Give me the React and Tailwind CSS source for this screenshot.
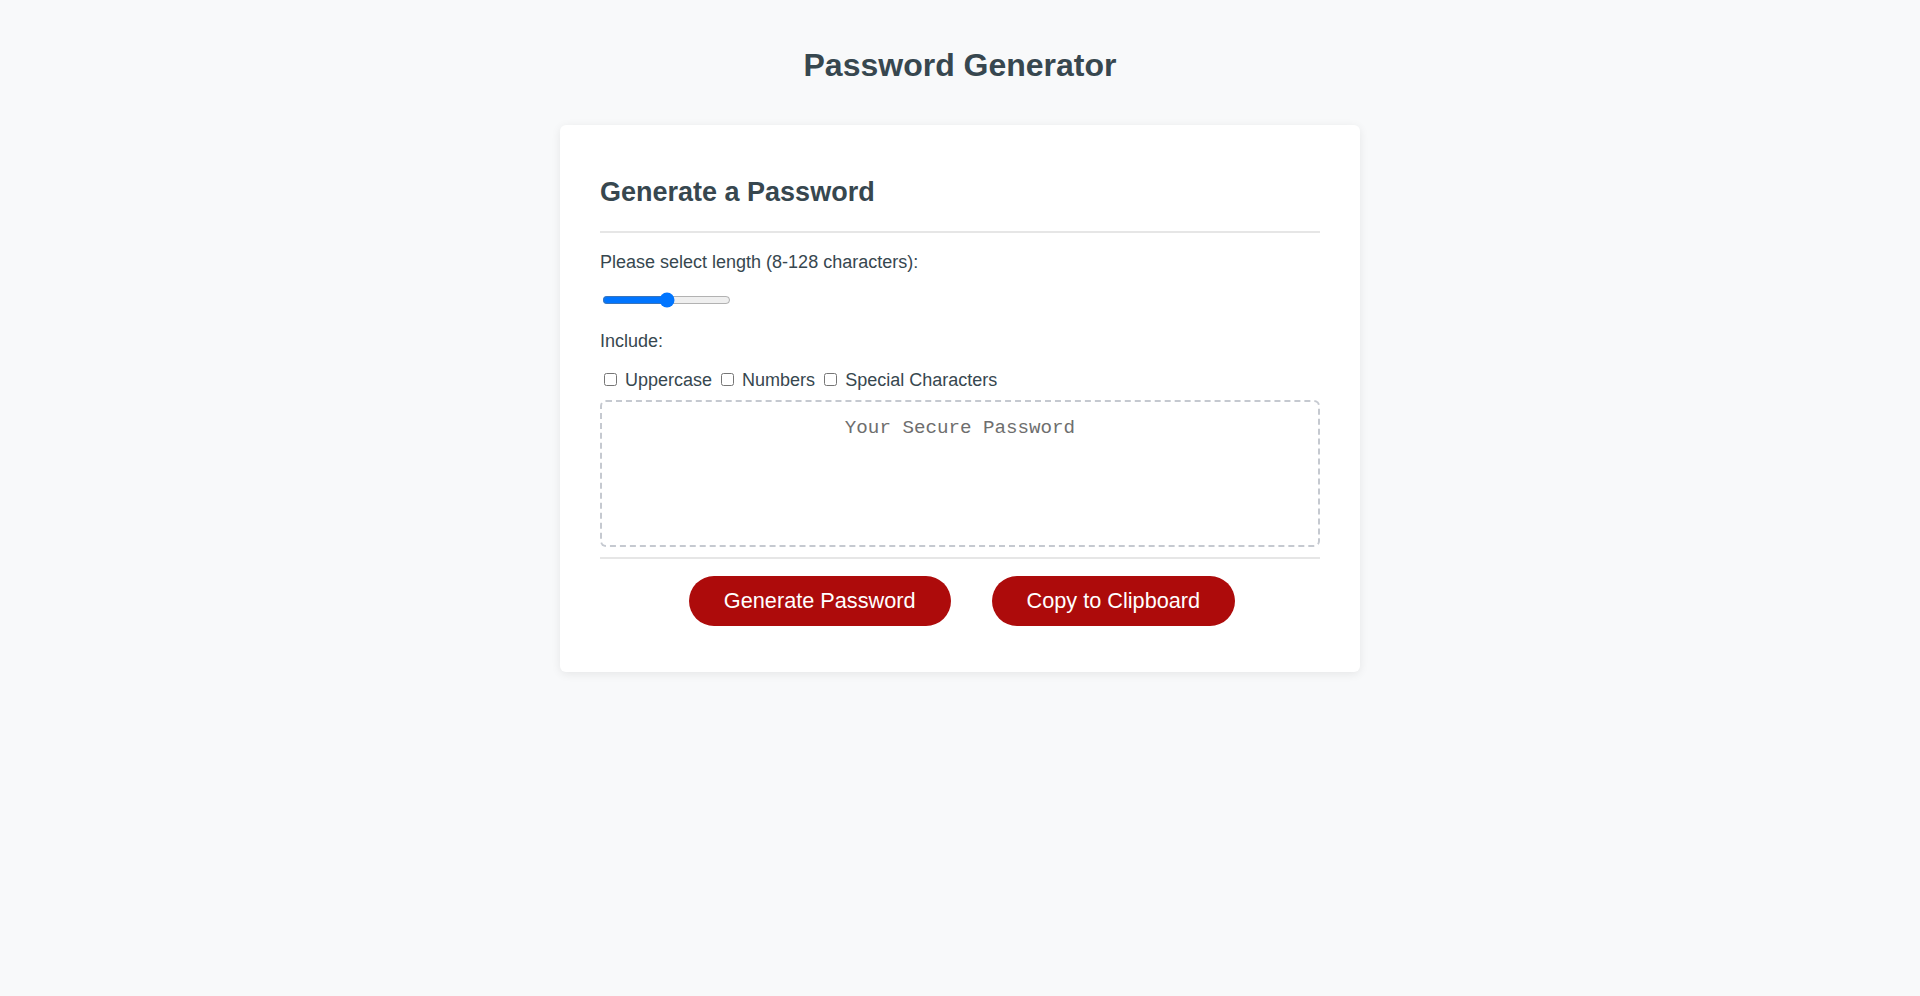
import React from "react";

export default function App() {
  return (
    <div className="min-h-screen bg-[#f8f9fa] pt-[47px] text-[#37474f]" style={{ fontFamily: '"Liberation Sans", Arial, sans-serif' }}>
      <h1 className="text-center text-[32px] font-bold leading-[37px]">Password Generator</h1>
      <div className="mx-auto mt-[41px] w-[800px] rounded-[6px] bg-white px-10 pt-[52px] pb-[46px] shadow-[0_2px_10px_rgba(0,0,0,0.08)]">
        <h2 className="text-[27px] font-bold leading-[31px]">Generate a Password</h2>
        <div className="mt-[23px] h-[2px] bg-[#e6e6e6]" />
        <p className="mt-[19px] text-[18px] leading-[21px]">Please select length (8-128 characters):</p>
        <input
          type="range"
          min={8}
          max={128}
          defaultValue={68}
          className="ml-[2px] mt-[19px] block h-4 w-[129px] accent-[#0075ff]"
        />
        <p className="mt-[23px] text-[18px] leading-[21px]">Include:</p>
        <div className="mt-[18px] text-[18px] leading-[21px]">
          <input type="checkbox" className="mb-[3px] ml-[4px] mr-[3px] mt-[3px]" />
          {" "}Uppercase{" "}
          <input type="checkbox" className="mb-[3px] ml-[4px] mr-[3px] mt-[3px]" />
          {" "}Numbers{" "}
          <input type="checkbox" className="mb-[3px] ml-[4px] mr-[3px] mt-[3px]" />
          {" "}Special Characters
        </div>
        <div
          className="mt-[9px] h-[147px] rounded-[6px] border-2 border-dashed border-[#c5c9d0] px-[15px] pt-[12px] text-center text-[19.2px] text-[#6e6e6e]"
          style={{ fontFamily: '"Liberation Mono", "Courier New", monospace' }}
        >
          Your Secure Password
        </div>
        <div className="mt-[10px] h-[2px] bg-[#e6e6e6]" />
        <div className="mt-[17px] flex justify-center gap-[41px] pl-[4px]">
          <button className="h-[50px] rounded-full bg-[#ad0b0b] px-[35px] text-[21.7px] text-white">Generate Password</button>
          <button className="h-[50px] rounded-full bg-[#ad0b0b] px-[35px] text-[21.7px] text-white">Copy to Clipboard</button>
        </div>
      </div>
    </div>
  );
}
